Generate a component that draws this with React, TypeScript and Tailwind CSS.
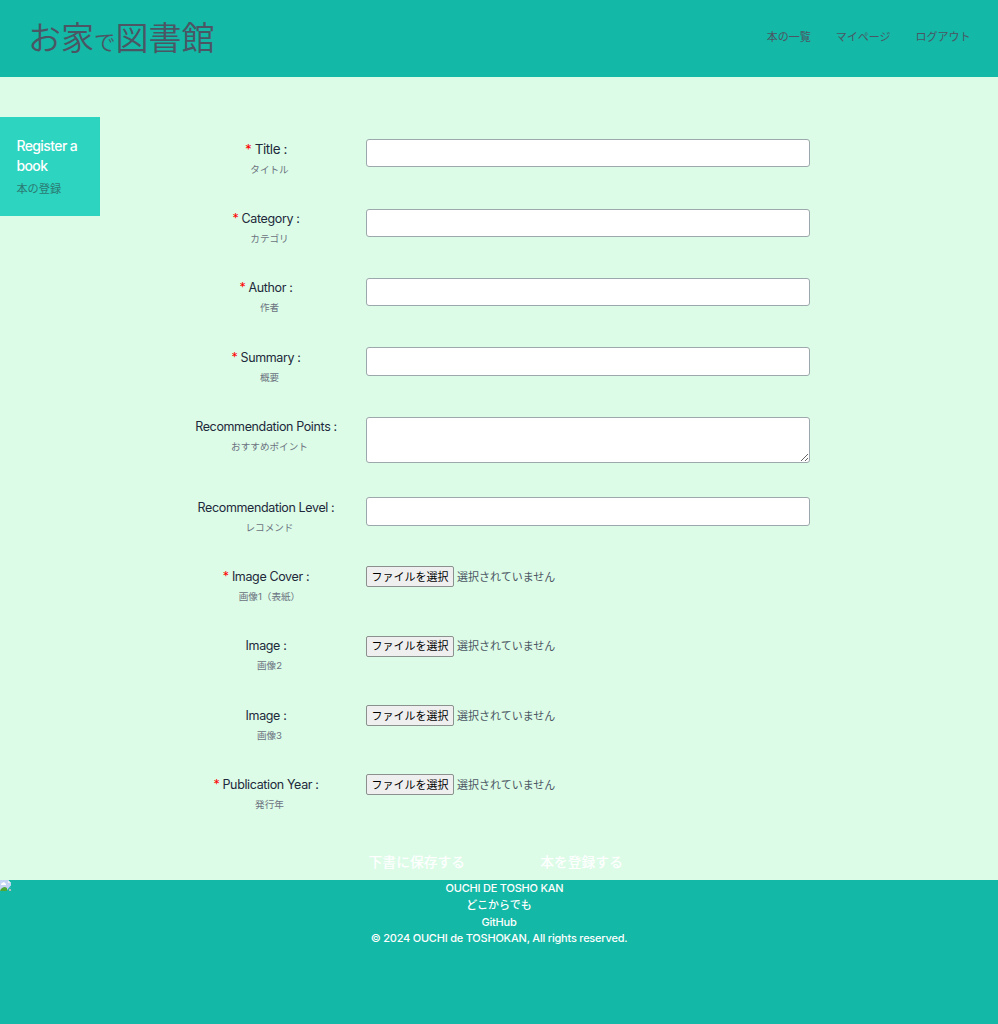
import { clsx } from "clsx";

type Field = {
  label: string;
  sub: string;
  kind: "text" | "tall" | "area" | "file";
  required?: boolean;
  large?: boolean;
};

const fields: Field[] = [
  { label: "Title :", sub: "タイトル", kind: "text", required: true, large: true },
  { label: "Category :", sub: "カテゴリ", kind: "text", required: true },
  { label: "Author :", sub: "作者", kind: "text", required: true },
  { label: "Summary :", sub: "概要", kind: "tall", required: true },
  { label: "Recommendation Points :", sub: "おすすめポイント", kind: "area" },
  { label: "Recommendation Level :", sub: "レコメンド", kind: "tall" },
  { label: "Image Cover :", sub: "画像1（表紙）", kind: "file", required: true },
  { label: "Image :", sub: "画像2", kind: "file" },
  { label: "Image :", sub: "画像3", kind: "file" },
  { label: "Publication Year :", sub: "発行年", kind: "file", required: true },
];

function Control({ kind }: { kind: Field["kind"] }) {
  if (kind === "file") {
    return (
      <div className="flex h-[21px] items-center">
        <button
          type="button"
          className="h-[21px] w-[88px] shrink-0 rounded-[2px] border border-[#8b918e] bg-[#efefef] text-[11px] leading-[18px] whitespace-nowrap text-black"
        >
          ファイルを選択
        </button>
        <span className="ml-[3px] text-[11px] leading-[20px] text-[#4b5563]">選択されていません</span>
      </div>
    );
  }
  if (kind === "area") {
    return <textarea className="block h-[46px] w-[444px] resize rounded-[3px] border border-[#9ca8ab] bg-white" />;
  }
  return (
    <input
      type="text"
      className={clsx(
        "block w-[444px] rounded-[3px] border border-[#9ca8ab] bg-white",
        kind === "tall" ? "h-[29px]" : "h-[28px]",
      )}
    />
  );
}

function Row({ field }: { field: Field }) {
  return (
    <div className={clsx("flex items-start", field.kind === "area" ? "h-[80.4px]" : "h-[69.35px]")}>
      <div className="w-[200px] shrink-0 text-center whitespace-nowrap">
        <p
          className={clsx(
            "text-[#1e293b]",
            field.large ? "text-[13.5px] leading-[20px] tracking-[-0.45px]" : "pt-[0.5px] text-[12.5px] leading-[20px] tracking-[-0.37px]",
          )}
        >
          {field.required && <span className="text-[#ff0000]">* </span>}
          {field.label}
        </p>
        <p className={clsx("pl-[7px] text-[9.6px] leading-[20px] text-[#6b7280]", field.large && "pt-px")}>
          {field.sub}
        </p>
      </div>
      <Control kind={field.kind} />
    </div>
  );
}

function BrokenImage() {
  return (
    <svg className="h-[11px] w-[11px]" viewBox="0 0 11 11">
      <path d="M0 0h8l3 3v4L7 11H0z" fill="#c3d4f4" />
      <path d="M8 0v3h3z" fill="#eef0f2" />
      <path d="M1 5V4l1-1 2-1 2 2v1z" fill="#fff" />
      <path d="M0 11c1-3 3-4 5-4l2 1v3z" fill="#4fa833" />
      <path d="M9 9h2v2H9z" fill="#b5bfc0" />
      <path d="M7 11l4-5" stroke="#14b8a6" strokeWidth="1.2" />
    </svg>
  );
}

export default function App() {
  return (
    <div className="flex h-[1024px] w-[998px] flex-col overflow-hidden bg-[#dcfce7] font-['Inter','Noto_Sans_CJK_JP',sans-serif]">
      <header className="flex h-[77.4px] shrink-0 justify-between bg-[#14b8a6] pr-[27.5px] pl-[28px] text-[#4b5563]">
        <h1 className="flex items-baseline pt-[14px] text-[33px] leading-[48px] font-[350]">
          お家<span className="text-[21.5px]">で</span>図書館
        </h1>
        <nav className="flex gap-[25px] pt-[27px] text-[11px] leading-[20px]">
          <a>本の一覧</a>
          <a>マイページ</a>
          <a>ログアウト</a>
        </nav>
      </header>

      <main className="flex h-[802.6px] shrink-0">
        <aside className="mt-[39.2px] h-[99.4px] w-[99.6px] shrink-0 bg-[#2dd4bf] pt-[19.8px] pl-[16.4px]">
          <h2 className="text-[14px] leading-[19.4px] font-medium tracking-[-0.6px] text-white">
            Register a<br />book
          </h2>
          <p className="mt-[4px] text-[11.2px] leading-[20px] text-[#2b7a73]">本の登録</p>
        </aside>
        <form className="ml-[66.4px] flex flex-col pt-[61.9px]">
          {fields.map((field, i) => (
            <Row key={i} field={field} />
          ))}
          <div className="mt-[6px] flex gap-[75px] pl-[202.6px] text-[13.8px] leading-[24px] font-medium text-white">
            <span>下書に保存する</span>
            <span>本を登録する</span>
          </div>
        </form>
      </main>

      <footer className="flex flex-1 flex-col bg-[#14b8a6] text-center text-[11px] leading-[16.7px] font-medium tracking-[-0.22px] text-white">
        <div className="flex h-[17px] items-start">
          <BrokenImage />
          <p className="flex-1">OUCHI DE TOSHO KAN</p>
        </div>
        <p className="tracking-normal">どこからでも</p>
        <p>GitHub</p>
        <p>© 2024 OUCHI de TOSHOKAN, All rights reserved.</p>
      </footer>
    </div>
  );
}
